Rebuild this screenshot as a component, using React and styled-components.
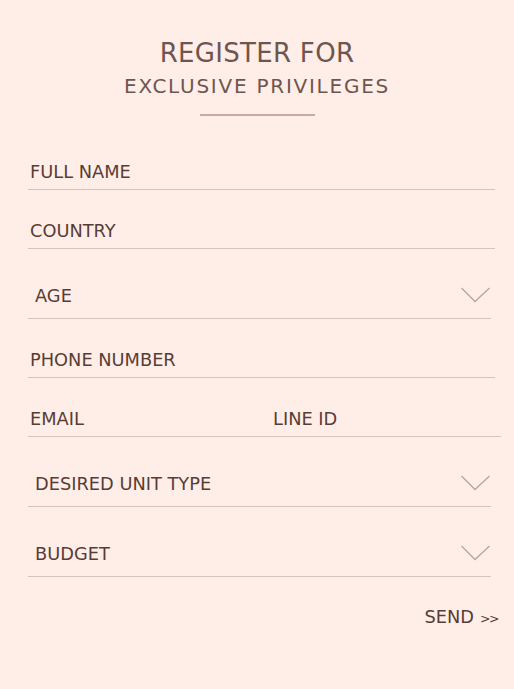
import React from "react";
import styled, { createGlobalStyle } from "styled-components";

const Global = createGlobalStyle`
  html, body { margin: 0; padding: 0; background: #ffede7; }
  body { font-family: "DejaVu Sans", "Noto Sans", sans-serif; }
`;

const Page = styled.div`
  min-height: 689px;
  box-sizing: border-box;
  padding: 38px 15px 0 28px;
  background: #ffede7;
  display: flex;
  flex-direction: column;
`;

const Header = styled.header`
  display: flex;
  flex-direction: column;
  align-items: center;
  color: #6e5650;
  margin-left: -28px;
  margin-right: -15px;
`;

const Title = styled.h1`
  margin: 0;
  font-weight: 400;
  font-size: 26px;
  line-height: 30px;
  letter-spacing: 0.3px;
`;

const Subtitle = styled.h2`
  margin: 6px 0 0;
  font-weight: 400;
  font-size: 20px;
  line-height: 24px;
  letter-spacing: 1.75px;
`;

const Divider = styled.div`
  width: 115px;
  height: 2px;
  margin-top: 16px;
  background: #c4aba3;
`;

const Form = styled.form`
  display: flex;
  flex-direction: column;
  align-items: flex-start;
  margin-top: 15px;
`;

const Field = styled.div`
  box-sizing: border-box;
  width: ${(p) => p.$w}px;
  height: ${(p) => (p.$select ? 70 : 59)}px;
  display: flex;
  align-items: ${(p) => (p.$select ? "center" : "flex-end")};
  justify-content: space-between;
  padding: ${(p) => (p.$select ? "24px 0 0 7px" : "0 0 6px 2px")};
  border-bottom: 1px solid #d5c3bc;
`;

const Pair = styled.div`
  box-sizing: border-box;
  width: 473px;
  height: 59px;
  display: grid;
  grid-template-columns: 243px 1fr;
  align-items: end;
  padding-bottom: 6px;
  border-bottom: 1px solid #d5c3bc;
`;

const Label = styled.span`
  color: #573d35;
  font-size: 17.8px;
  line-height: 22px;
  padding-left: ${(p) => p.$indent || 0}px;
`;

const Chevron = styled.svg`
  width: 30px;
  height: 16px;
  flex: none;
  margin-top: -2px;
`;

const SendRow = styled.div`
  display: flex;
  justify-content: flex-end;
  margin-top: 29px;
`;

const Send = styled.button`
  background: none;
  border: 0;
  padding: 0;
  color: #573d35;
  font-family: inherit;
  font-size: 17.8px;
  line-height: 22px;
  cursor: pointer;
  display: flex;
  align-items: baseline;
  gap: 6px;
`;

const Arrows = styled.span`
  font-size: 12.5px;
  letter-spacing: -1.5px;
  padding-right: 1px;
`;

const Down = () => (
  <Chevron viewBox="0 0 30 16" fill="none">
    <polyline points="0.5,1 14,14.5 28.5,1" stroke="#b7a59f" strokeWidth="1.3" />
  </Chevron>
);

export default function App() {
  return (
    <>
      <Global />
      <Page>
        <Header>
          <Title>REGISTER FOR</Title>
          <Subtitle>EXCLUSIVE PRIVILEGES</Subtitle>
          <Divider />
        </Header>
        <Form onSubmit={(e) => e.preventDefault()}>
          <Field $w={467}><Label>FULL NAME</Label></Field>
          <Field $w={467}><Label>COUNTRY</Label></Field>
          <Field $w={463} $select><Label>AGE</Label><Down /></Field>
          <Field $w={467}><Label>PHONE NUMBER</Label></Field>
          <Pair>
            <Label $indent={2}>EMAIL</Label>
            <Label $indent={2}>LINE ID</Label>
          </Pair>
          <Field $w={463} $select><Label>DESIRED UNIT TYPE</Label><Down /></Field>
          <Field $w={463} $select><Label>BUDGET</Label><Down /></Field>
        </Form>
        <SendRow>
          <Send type="button">SEND <Arrows>&gt;&gt;</Arrows></Send>
        </SendRow>
      </Page>
    </>
  );
}
